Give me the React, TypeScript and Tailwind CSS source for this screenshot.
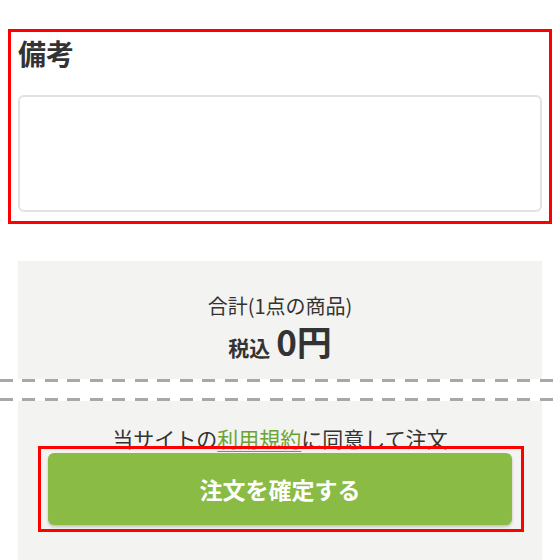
export default function App() {
  return (
    <div className="min-h-[560px] bg-white pt-[29px] font-['Noto_Sans_CJK_JP','Noto_Sans',sans-serif] text-[#333]">
      {/* Note section */}
      <div className="mx-[8px] w-[544px] border-[3px] border-[#ff0000] px-[7px] pt-[3px] pb-[9px]">
        <h2 className="text-[28px] leading-[36px] font-bold text-[#333]">備考</h2>
        <textarea
          className="mt-[24px] block h-[117px] w-full resize-none rounded-[6px] border-2 border-[#e2e2e2] bg-white outline-none"
        />
      </div>

      {/* Order summary */}
      <div className="mx-[18px] mt-[37px] h-[118px] bg-[#f3f3f2] pt-[30px] text-center">
        <p className="text-[20px] leading-[30px]">合計(1点の商品)</p>
        <p className="flex items-baseline justify-center gap-[6px] font-bold">
          <span className="text-[21px] leading-[40px]">税込</span>
          <span className="text-[35px] leading-[40px]">0円</span>
        </p>
      </div>

      {/* Tear line */}
      <div className="h-[3px] w-full bg-[repeating-linear-gradient(90deg,#a8a8a8_0_13px,transparent_13px_22.5px)]" />
      <div className="h-[16px] w-full bg-white" />
      <div className="h-[3px] w-full bg-[repeating-linear-gradient(90deg,#a8a8a8_0_13px,transparent_13px_22.5px)]" />

      <div className="mx-[18px] h-[160px] bg-[#f3f3f2] pt-[22px] text-center">
        <p className="text-[21px] leading-[31px]">
          当サイトの
          <a href="#" className="text-[#6ba32f] underline decoration-1 underline-offset-4">
            利用規約
          </a>
          に同意して注文
        </p>
        <div className="relative mx-[30px] mt-[-1px]">
          <button className="flex h-[72px] w-full items-center justify-center rounded-[6px] bg-[#89bb45] text-[23px] font-bold text-white shadow-[0_2px_3px_rgba(0,0,0,0.2)]">
            注文を確定する
          </button>
          <div className="pointer-events-none absolute -top-[7px] -right-[12px] -bottom-[7px] -left-[10px] border-[3px] border-[#ff0000]" />
        </div>
      </div>
    </div>
  );
}
